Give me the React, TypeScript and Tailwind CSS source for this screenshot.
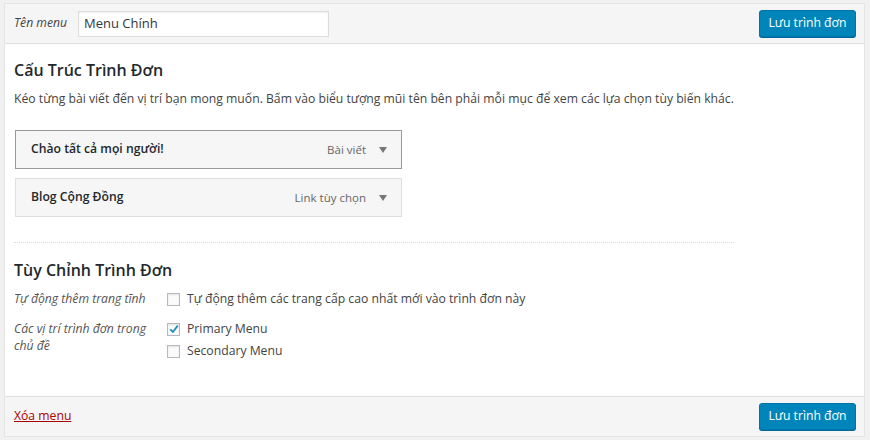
import React from "react";

const font = { fontFamily: '"Open Sans", "Noto Sans", sans-serif' };

function Checkbox({ checked }: { checked?: boolean }) {
  return (
    <span className="relative inline-block w-[13px] h-[13px] border border-[#b4b9be] bg-[#fbfbfb] shadow-[inset_0_1px_2px_rgba(0,0,0,0.1)] shrink-0">
      {checked && (
        <svg viewBox="0 0 16 16" className="absolute left-[0px] top-[-1px] w-[12px] h-[12px]">
          <path d="M3 8.5 L6.5 12 L13 3.5" fill="none" stroke="#1e8cbe" strokeWidth="2.4" />
        </svg>
      )}
    </span>
  );
}

function Item({ title, type, active }: { title: string; type: string; active?: boolean }) {
  return (
    <div
      className={`w-[387px] h-[39px] flex items-center pl-[15px] pr-[14px] bg-[#f6f6f6] border ${
        active ? "border-[#999]" : "border-[#dfdfdf]"
      }`}
    >
      <span className="text-[12.2px] font-semibold text-[#23282d] flex-1">{title}</span>
      <span className="text-[11.5px] text-[#666] mr-[13px]">{type}</span>
      <svg viewBox="0 0 8 6" className="w-[8px] h-[6px]">
        <path d="M0 0 L8 0 L4 6 Z" fill="#777" />
      </svg>
    </div>
  );
}

function Button() {
  return (
    <button className="h-[27px] w-[97px] whitespace-nowrap rounded-[3px] bg-[#0085ba] border border-[#0073aa] text-white text-[12.2px] shadow-[0_1px_0_#006799]">
      Lưu trình đơn
    </button>
  );
}

export default function App() {
  return (
    <div className="w-[870px] h-[440px] bg-[#f1f1f1] pt-[3px] pl-[4px] overflow-hidden" style={font}>
      <div className="w-[861px] border border-[#e5e5e5] bg-white">
        <div className="h-[40px] bg-[#f5f5f5] border-b border-[#dfdfdf] flex items-center pl-[9px] pr-[8px]">
          <span className="w-[64px] italic text-[12.2px] text-[#444]">Tên menu</span>
          <div className="w-[251px] h-[26px] bg-white border border-[#ddd] shadow-[inset_0_1px_2px_rgba(0,0,0,0.07)] flex items-center px-[5px] text-[13px] text-[#32373c]">
            Menu Chính
          </div>
          <div className="flex-1" />
          <Button />
        </div>
        <div className="h-[352px] px-[9px] pt-[14px]">
          <h3 className="text-[16px] font-semibold text-[#23282d] leading-[24px]">Cấu Trúc Trình Đơn</h3>
          <p className="text-[12.2px] text-[#444] mt-[7px] leading-[20px]">
            Kéo từng bài viết đến vị trí bạn mong muốn. Bấm vào biểu tượng mũi tên bên phải mỗi mục để xem các lựa chọn tùy biến khác.
          </p>
          <div className="mt-[21px] pl-[1px] flex flex-col gap-[9px]">
            <Item title="Chào tất cả mọi người!" type="Bài viết" active />
            <Item title="Blog Cộng Đồng" type="Link tùy chọn" />
          </div>
          <div className="w-[720px] mt-[25px] border-t border-dotted border-[#ddd]" />
          <h3 className="text-[16px] font-semibold text-[#23282d] leading-[24px] mt-[15px]">Tùy Chỉnh Trình Đơn</h3>
          <div className="flex mt-[7px] items-center h-[20px]">
            <span className="w-[153px] italic text-[12.2px] text-[#555]">Tự động thêm trang tĩnh</span>
            <Checkbox />
            <span className="ml-[7px] text-[12.2px] text-[#444]">Tự động thêm các trang cấp cao nhất mới vào trình đơn này</span>
          </div>
          <div className="flex mt-[10px]">
            <span className="w-[153px] italic text-[12.2px] text-[#555] leading-[17px] pt-[1px] pr-[12px]">Các vị trí trình đơn trong chủ đề</span>
            <div className="flex flex-col gap-[2px]">
              <div className="flex items-center h-[20px]">
                <Checkbox checked />
                <span className="ml-[7px] text-[12.2px] text-[#444]">Primary Menu</span>
              </div>
              <div className="flex items-center h-[20px]">
                <Checkbox />
                <span className="ml-[7px] text-[12.2px] text-[#444]">Secondary Menu</span>
              </div>
            </div>
          </div>
        </div>
        <div className="h-[40px] bg-[#f5f5f5] border-t border-[#dfdfdf] flex items-center pl-[9px] pr-[8px]">
          <a className="text-[12.2px] text-[#a00] underline">Xóa menu</a>
          <div className="flex-1" />
          <Button />
        </div>
      </div>
    </div>
  );
}
